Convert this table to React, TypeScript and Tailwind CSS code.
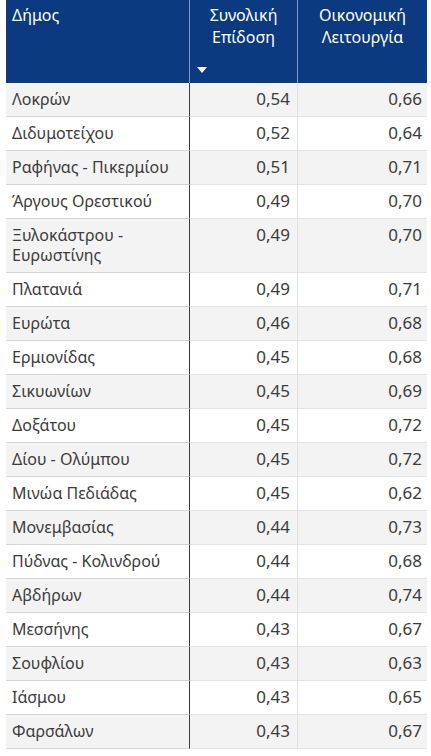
const rows: [string, string, string][] = [
  ["Λοκρών", "0,54", "0,66"],
  ["Διδυμοτείχου", "0,52", "0,64"],
  ["Ραφήνας - Πικερμίου", "0,51", "0,71"],
  ["Άργους Ορεστικού", "0,49", "0,70"],
  ["Ξυλοκάστρου - Ευρωστίνης", "0,49", "0,70"],
  ["Πλατανιά", "0,49", "0,71"],
  ["Ευρώτα", "0,46", "0,68"],
  ["Ερμιονίδας", "0,45", "0,68"],
  ["Σικυωνίων", "0,45", "0,69"],
  ["Δοξάτου", "0,45", "0,72"],
  ["Δίου - Ολύμπου", "0,45", "0,72"],
  ["Μινώα Πεδιάδας", "0,45", "0,62"],
  ["Μονεμβασίας", "0,44", "0,73"],
  ["Πύδνας - Κολινδρού", "0,44", "0,68"],
  ["Αβδήρων", "0,44", "0,74"],
  ["Μεσσήνης", "0,43", "0,67"],
  ["Σουφλίου", "0,43", "0,63"],
  ["Ιάσμου", "0,43", "0,65"],
  ["Φαρσάλων", "0,43", "0,67"],
];

export default function App() {
  return (
    <div className="w-[431px] h-[756px] overflow-hidden bg-white pl-[6px] pr-[4px] font-['Noto_Sans',sans-serif] text-[16px] text-[#3c3c3c]">
      <div className="grid grid-cols-[183px_108px_130px] h-[83px] bg-[#0b3a80] text-white leading-[22px]">
        <div className="pl-[6px] pt-[4px]">Δήμος</div>
        <div className="relative border-l border-[#7f9cc4] pt-[4px] text-center">
          Συνολική
          <br />
          Επίδοση
          <svg className="absolute left-[7px] top-[67px]" width="10" height="6" viewBox="0 0 10 6">
            <path d="M0 0 L10 0 L5 6 Z" fill="#ffffff" />
          </svg>
        </div>
        <div className="border-l border-[#7f9cc4] pt-[4px] text-center">
          Οικονομική
          <br />
          Λειτουργία
        </div>
      </div>
      {rows.map(([name, a, b], i) => (
        <div
          key={name}
          className={`grid grid-cols-[183px_108px_130px] leading-[20px] ${i % 2 === 0 ? "bg-[#f3f3f3]" : "bg-white"}`}
        >
          <div className="border-b border-[#d6d6d6] pl-[6px] pr-2 pt-[6px] pb-[7px]">{name}</div>
          <div className="border-l border-l-[#3c3c3c] border-b border-[#e4e4e4] text-right pr-[7px] pt-[6px] pb-[7px] text-[17px]">{a}</div>
          <div className="border-l border-l-[#e2e2e2] border-b border-[#e4e4e4] text-right pr-[5px] pt-[6px] pb-[7px] text-[17px]">{b}</div>
        </div>
      ))}
    </div>
  );
}
